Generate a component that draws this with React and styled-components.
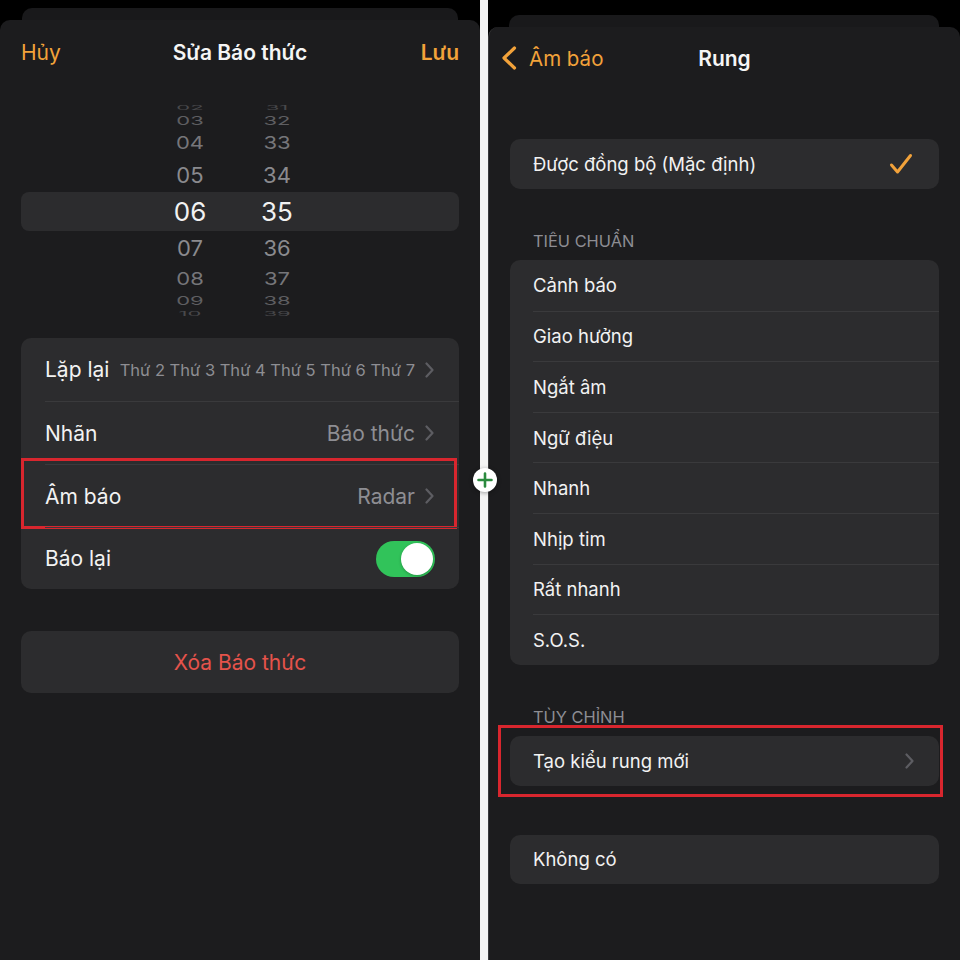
import React from 'react';
import styled, { createGlobalStyle } from 'styled-components';

const GlobalStyle = createGlobalStyle`
  * { box-sizing: border-box; }
  html, body { margin: 0; padding: 0; background: #000; }
  body {
    font-family: Inter, "Noto Sans", "Liberation Sans", sans-serif;
    -webkit-font-smoothing: antialiased;
  }
`;

const ORANGE = '#f2a23a';
const MARK_RED = '#d8262e';

const Page = styled.div`
  position: relative;
  display: flex;
  width: 960px;
  height: 960px;
  background: #000;
  overflow: hidden;
`;

const Column = styled.div`
  width: ${p => p.$w}px;
  display: flex;
  flex-direction: column;
  padding-top: ${p => p.$top}px;
`;

const Splitter = styled.div`
  width: 8px;
  background: #f4f4f4;
`;

const StackEdge = styled.div`
  height: 12px;
  margin: 0 ${p => p.$right}px 0 ${p => p.$left}px;
  background: #19191b;
  border-radius: 10px 10px 0 0;
`;

const Sheet = styled.div`
  flex: 1;
  background: #1c1c1e;
  border-radius: 10px 10px 0 0;
  padding: 0 21px;
  border-left: ${p => (p.$edge ? '1px solid #3a3a3c' : 'none')};
`;

const NavBar = styled.div`
  display: grid;
  grid-template-columns: 1fr auto 1fr;
  align-items: center;
  height: ${p => p.$h}px;
`;

const NavTitle = styled.div`
  font-size: 21px;
  font-weight: 600;
  color: #f5f5f5;
`;

const NavButton = styled.div`
  display: flex;
  align-items: center;
  gap: 12px;
  justify-self: ${p => (p.$end ? 'end' : 'start')};
  margin-left: ${p => p.$shift || 0}px;
  font-size: ${p => p.$size || 21}px;
  font-weight: ${p => (p.$bold ? 600 : 400)};
  color: ${ORANGE};
`;

/* time wheel */
const Wheel = styled.div`
  padding-top: 19px;
`;

const WheelRow = styled.div`
  display: flex;
  align-items: center;
  gap: 27px;
  height: ${p => p.$h}px;
  padding-left: 139px;
  border-radius: 8px;
  background: ${p => (p.$selected ? '#2c2c2e' : 'transparent')};
`;

const WheelNum = styled.span`
  width: 60px;
  text-align: center;
  font-size: ${p => (p.$selected ? 26 : 22)}px;
  line-height: 1;
  color: ${p => p.$color};
  transform: scaleY(${p => p.$sy});
`;

const Group = styled.div`
  background: #2c2c2e;
  border-radius: 10px;
  margin-top: ${p => p.$mt || 0}px;
`;

const Row = styled.div`
  position: relative;
  display: flex;
  height: ${p => p.$h}px;
  padding-left: ${p => p.$pl}px;
`;

const RowBody = styled.div`
  flex: 1;
  display: flex;
  align-items: center;
  gap: 10px;
  padding-right: ${p => p.$pr}px;
  border-top: ${p => (p.$first ? 'none' : '1px solid #3a3a3c')};
`;

const Label = styled.span`
  flex: 1;
  font-size: ${p => p.$size}px;
  color: #f2f2f2;
  white-space: nowrap;
`;

const Value = styled.span`
  font-size: ${p => p.$size || 21}px;
  color: #8e8e93;
  white-space: nowrap;
`;

const Callout = styled.span`
  position: absolute;
  top: ${p => p.$t}px;
  bottom: ${p => p.$b}px;
  left: ${p => p.$l}px;
  right: ${p => p.$r}px;
  border: 3px solid ${MARK_RED};
  pointer-events: none;
`;

const Switch = styled.div`
  display: flex;
  justify-content: flex-end;
  align-items: center;
  width: 59px;
  height: 36px;
  padding: 2px;
  border-radius: 18px;
  background: #31c35a;
`;

const Knob = styled.div`
  width: 32px;
  height: 32px;
  border-radius: 50%;
  background: #fff;
  box-shadow: 0 1px 3px rgba(0, 0, 0, 0.25);
`;

const DangerButton = styled.div`
  display: flex;
  align-items: center;
  justify-content: center;
  height: 62px;
  margin-top: 42px;
  background: #2c2c2e;
  border-radius: 10px;
  font-size: 21px;
  color: #e5534b;
`;

const SectionTitle = styled.div`
  height: 20px;
  margin: 42px 0 9px 23px;
  font-size: 16.4px;
  line-height: 20px;
  color: #8d8d93;
  text-transform: uppercase;
`;

const MergeBadge = styled.div`
  position: absolute;
  left: 473px;
  top: 468px;
  width: 24px;
  height: 24px;
  border-radius: 50%;
  background: #fff;
  box-shadow: 0 1px 4px rgba(0, 0, 0, 0.35);
  display: flex;
  align-items: center;
  justify-content: center;
`;

const Chevron = () => (
  <svg width="9" height="16" viewBox="0 0 9 16" fill="none">
    <path d="M1.5 1.5L7.5 8L1.5 14.5" stroke="#5d5d62" strokeWidth="2.2" strokeLinecap="round" strokeLinejoin="round" />
  </svg>
);

const BackChevron = () => (
  <svg width="16" height="24" viewBox="0 0 16 24" fill="none">
    <path d="M13.5 2L3 12L13.5 22" stroke={ORANGE} strokeWidth="3.2" strokeLinecap="round" strokeLinejoin="round" />
  </svg>
);

const Check = () => (
  <svg width="24" height="22" viewBox="0 0 24 22" fill="none">
    <path d="M2.5 12L8.5 19L21.5 2.5" stroke={ORANGE} strokeWidth="3" strokeLinecap="round" strokeLinejoin="round" />
  </svg>
);

const wheel = [
  { h: '02', m: '31', height: 10, sy: 0.25, color: '#48484b' },
  { h: '03', m: '32', height: 16, sy: 0.55, color: '#5e5e61' },
  { h: '04', m: '33', height: 28, sy: 0.8, color: '#76767a' },
  { h: '05', m: '34', height: 35, sy: 0.97, color: '#8a8a8e' },
  { h: '06', m: '35', height: 39, sy: 1, color: '#f2f2f2', selected: true },
  { h: '07', m: '36', height: 34, sy: 0.97, color: '#8a8a8e' },
  { h: '08', m: '37', height: 28, sy: 0.8, color: '#76767a' },
  { h: '09', m: '38', height: 16, sy: 0.55, color: '#5e5e61' },
  { h: '10', m: '39', height: 10, sy: 0.25, color: '#48484b' },
];

const patterns = ['Cảnh báo', 'Giao hưởng', 'Ngắt âm', 'Ngữ điệu', 'Nhanh', 'Nhịp tim', 'Rất nhanh', 'S.O.S.'];

function EditAlarm() {
  return (
    <Column $w={480} $top={8}>
      <StackEdge $left={22} $right={22} />
      <Sheet>
        <NavBar $h={64}>
          <NavButton>Hủy</NavButton>
          <NavTitle>Sửa Báo thức</NavTitle>
          <NavButton $end $bold>Lưu</NavButton>
        </NavBar>

        <Wheel>
          {wheel.map(r => (
            <WheelRow key={r.h} $h={r.height} $selected={r.selected}>
              <WheelNum $color={r.color} $sy={r.sy} $selected={r.selected}>{r.h}</WheelNum>
              <WheelNum $color={r.color} $sy={r.sy} $selected={r.selected}>{r.m}</WheelNum>
            </WheelRow>
          ))}
        </Wheel>

        <Group $mt={19}>
          <Row $h={63} $pl={24}>
            <RowBody $first $pr={25}>
              <Label $size={21}>Lặp lại</Label>
              <Value $size={16.5}>Thứ 2 Thứ 3 Thứ 4 Thứ 5 Thứ 6 Thứ 7</Value>
              <Chevron />
            </RowBody>
          </Row>
          <Row $h={63} $pl={24}>
            <RowBody $pr={25}>
              <Label $size={21}>Nhãn</Label>
              <Value>Báo thức</Value>
              <Chevron />
            </RowBody>
          </Row>
          <Row $h={63} $pl={24}>
            <RowBody $pr={25}>
              <Label $size={21}>Âm báo</Label>
              <Value>Radar</Value>
              <Chevron />
            </RowBody>
            <Callout $t={-6} $b={-2} $l={0} $r={2} />
          </Row>
          <Row $h={62} $pl={24}>
            <RowBody $pr={24}>
              <Label $size={21}>Báo lại</Label>
              <Switch><Knob /></Switch>
            </RowBody>
          </Row>
        </Group>

        <DangerButton>Xóa Báo thức</DangerButton>
      </Sheet>
    </Column>
  );
}

function Vibration() {
  return (
    <Column $w={472} $top={15}>
      <StackEdge $left={21} $right={21} />
      <Sheet $edge>
        <NavBar $h={62}>
          <NavButton $shift={-9} $size={20.5}>
            <BackChevron />
            Âm báo
          </NavButton>
          <NavTitle>Rung</NavTitle>
          <span />
        </NavBar>

        <Group $mt={50}>
          <Row $h={50} $pl={23}>
            <RowBody $first $pr={26}>
              <Label $size={18.5}>Được đồng bộ (Mặc định)</Label>
              <Check />
            </RowBody>
          </Row>
        </Group>

        <SectionTitle>Tiêu chuẩn</SectionTitle>
        <Group>
          {patterns.map((name, i) => (
            <Row key={name} $h={50.6} $pl={23}>
              <RowBody $first={i === 0} $pr={20}>
                <Label $size={18.5}>{name}</Label>
              </RowBody>
            </Row>
          ))}
        </Group>

        <SectionTitle>Tùy chỉnh</SectionTitle>
        <Group>
          <Row $h={50} $pl={23}>
            <RowBody $first $pr={25}>
              <Label $size={18.5}>Tạo kiểu rung mới</Label>
              <Chevron />
            </RowBody>
            <Callout $t={-11} $b={-11} $l={-12} $r={-4} />
          </Row>
        </Group>

        <Group $mt={49}>
          <Row $h={49} $pl={23}>
            <RowBody $first $pr={20}>
              <Label $size={18.5}>Không có</Label>
            </RowBody>
          </Row>
        </Group>
      </Sheet>
    </Column>
  );
}

export default function App() {
  return (
    <>
      <GlobalStyle />
      <Page>
        <EditAlarm />
        <Splitter />
        <Vibration />
        <MergeBadge>
          <svg width="16" height="16" viewBox="0 0 16 16">
            <path d="M8 1.5V14.5M1.5 8H14.5" stroke="#2b8a3e" strokeWidth="2.6" strokeLinecap="round" />
          </svg>
        </MergeBadge>
      </Page>
    </>
  );
}
